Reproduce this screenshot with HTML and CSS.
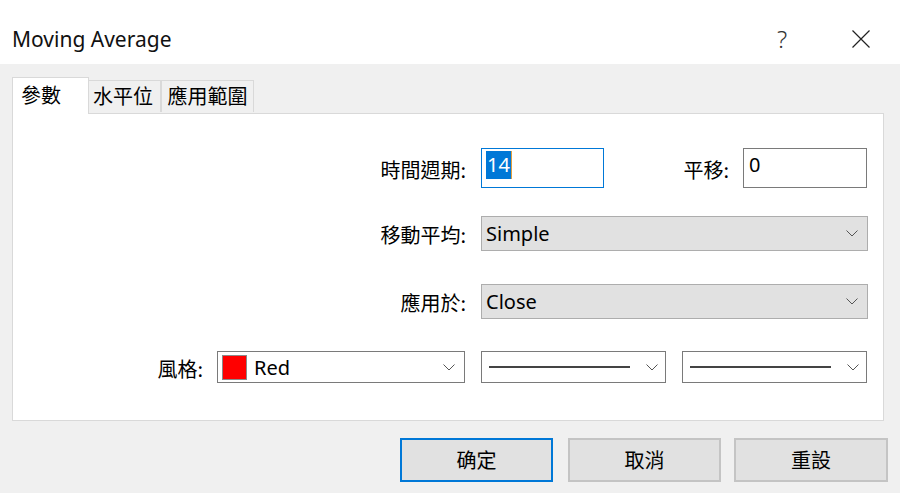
FILE: index.html
```html
<!DOCTYPE html>
<html lang="zh-Hant">
<head>
<meta charset="utf-8">
<title>Moving Average</title>
<link rel="stylesheet" href="styles.css">
</head>
<body>
<div class="window">
  <header class="titlebar">
    <span class="title">Moving Average</span>
    <div class="controls">
      <span class="help">?</span>
      <svg class="close" width="18" height="18" viewBox="0 0 18 18"><path d="M0.5 0.5 L17.5 17.5 M17.5 0.5 L0.5 17.5" stroke="#222" stroke-width="1.2" fill="none"/></svg>
    </div>
  </header>
  <main class="body">
    <nav class="tabs">
      <span class="tab tab-active tab-1">參數</span>
      <span class="tab tab-2">水平位</span>
      <span class="tab tab-3">應用範圍</span>
    </nav>
    <section class="panel">
      <div class="row row-1">
        <label class="label label-wide">時間週期:</label>
        <div class="input input-focus input-period"><span class="sel">14</span></div>
        <label class="label label-shift">平移:</label>
        <div class="input input-shift">0</div>
      </div>
      <div class="row row-2">
        <label class="label label-wide">移動平均:</label>
        <div class="combo combo-wide"><span class="combo-text">Simple</span><svg class="chev" width="12" height="7" viewBox="0 0 12 7"><path d="M0.5 0.5 L6 6 L11.5 0.5" stroke="#555" stroke-width="1" fill="none"/></svg></div>
      </div>
      <div class="row row-3">
        <label class="label label-wide">應用於:</label>
        <div class="combo combo-wide"><span class="combo-text">Close</span><svg class="chev" width="12" height="7" viewBox="0 0 12 7"><path d="M0.5 0.5 L6 6 L11.5 0.5" stroke="#555" stroke-width="1" fill="none"/></svg></div>
      </div>
      <div class="row row-4">
        <label class="label label-style">風格:</label>
        <div class="combo combo-white combo-color"><span class="swatch"></span><span class="combo-text">Red</span><svg class="chev" width="12" height="7" viewBox="0 0 12 7"><path d="M0.5 0.5 L6 6 L11.5 0.5" stroke="#555" stroke-width="1" fill="none"/></svg></div>
        <div class="combo combo-white combo-line"><span class="line"></span><svg class="chev" width="12" height="7" viewBox="0 0 12 7"><path d="M0.5 0.5 L6 6 L11.5 0.5" stroke="#555" stroke-width="1" fill="none"/></svg></div>
        <div class="combo combo-white combo-line"><span class="line"></span><svg class="chev" width="12" height="7" viewBox="0 0 12 7"><path d="M0.5 0.5 L6 6 L11.5 0.5" stroke="#555" stroke-width="1" fill="none"/></svg></div>
      </div>
    </section>
    <div class="buttons">
      <button class="btn btn-default">确定</button>
      <button class="btn btn-cancel">取消</button>
      <button class="btn btn-reset">重設</button>
    </div>
  </main>
</div>
</body>
</html>
```

FILE: styles.css
```css
* { box-sizing: border-box; }
html, body { margin: 0; padding: 0; background: #ffffff; }
body {
  font-family: "Noto Sans", "Noto Sans CJK TC", sans-serif;
  color: #000;
  font-size: 20px;
}
.window { width: 900px; height: 500px; background: #fff; }

.titlebar {
  height: 64px;
  display: flex;
  align-items: center;
  padding-left: 12px;
  padding-top: 14px;
  background: #fff;
}
.title { font-size: 21px; color: #111; flex: 1; }
.controls { display: flex; align-items: center; height: 100%; }
.help {
  font-size: 24px; font-weight: 300; color: #333; width: 16px; text-align: center;
  margin-right: 62px; line-height: 1;
}
.close { margin-right: 30px; display: block; }

.body {
  background: #f0f0f0;
  height: 429px;
  padding: 13px 16px 0 12px;
}
.tabs { display: flex; align-items: flex-end; height: 36px; }
.tab {
  font-family: "Noto Sans CJK TC", sans-serif;
  font-size: 20px;
  height: 32px;
  line-height: 30px;
  border: 1px solid #d9d9d9;
  border-bottom: none;
  background: #f0f0f0;
  text-align: center;
  margin-bottom: 1px;
}
.tab-2 { width: 72px; border-left: none; text-align: left; padding-left: 4px; }
.tab-3 { width: 93px; border-left: 1px solid #d9d9d9; }
.tab-active {
  width: 77px;
  height: 37px;
  background: #fff;
  margin-bottom: -1px;
  position: relative;
  z-index: 1;
  text-align: left;
  padding-left: 8px;
  line-height: 34px;
}

.panel {
  background: #fff;
  border: 1px solid #d9d9d9;
  height: 308px;
  width: 872px;
  padding-top: 34px;
}
.row { display: flex; align-items: center; }
.row-1 { height: 40px; }
.row-2 { height: 35px; margin-top: 28px; }
.row-3 { height: 35px; margin-top: 33px; }
.row-4 { height: 32px; margin-top: 32px; }

.label {
  font-family: "Noto Sans CJK TC", sans-serif;
  font-size: 20px;
  text-align: right;
  padding-top: 2px;
}
.label-wide { width: 453px; margin-right: 15px; }
.label-shift { width: 125px; margin-right: 14px; }
.label-style { width: 190px; margin-right: 14px; }

.input {
  height: 40px;
  border: 1px solid #7a7a7a;
  background: #fff;
  font-size: 20px;
  padding: 2px 0 0 5px;
  line-height: 28px;
}
.input-focus { border-color: #0078d7; }
.input-period { width: 123px; padding-left: 4px; }
.input-shift { width: 124px; }
.sel {
  display: inline-block;
  background: #0078d7;
  color: #fff;
  height: 28px;
  line-height: 28px;
  padding: 0 1px;
  border-right: 1px solid #e0a040;
}

.combo {
  display: flex;
  align-items: center;
  height: 100%;
  border: 1px solid #adadad;
  background: #e1e1e1;
  padding: 0 9px 0 4px;
}
.combo-wide { width: 387px; }
.combo-text { flex: 1; font-size: 20px; }
.chev { display: block; flex: none; }
.combo-white { background: #fff; border-color: #7a7a7a; }
.combo-color { width: 248px; margin-right: 16px; }
.combo-line { width: 185px; margin-right: 16px; padding-left: 7px; }
.swatch {
  width: 25px; height: 25px;
  background: #ff0000;
  border: 1px solid #8a8a8a;
  margin-right: 7px;
  flex: none;
}
.line {
  flex: none;
  width: 141px;
  height: 2px;
  background: #444;
  margin-right: 16px;
}

.buttons {
  display: flex;
  justify-content: flex-end;
  margin-top: 17px;
  margin-right: -4px;
}
.btn {
  font-family: "Noto Sans CJK TC", sans-serif;
  font-size: 20px;
  height: 44px;
  width: 153px;
  background: #e1e1e1;
  border: 2px solid #c4c4c4;
  color: #000;
  padding: 0 0 2px;
  margin-left: 15px;
}
.btn-reset { width: 154px; margin-left: 13px; }
.btn-default { border-color: #0078d7; }
```
